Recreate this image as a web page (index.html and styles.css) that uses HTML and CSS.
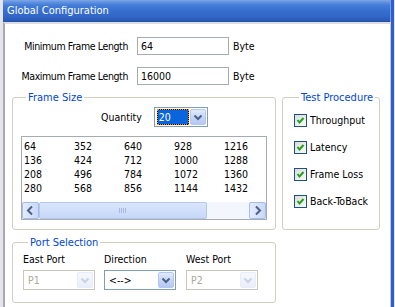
FILE: index.html
```html
<!DOCTYPE html>
<html>
<head>
<meta charset="utf-8">
<link rel="stylesheet" href="styles.css">
</head>
<body>
<div class="frame">
  <div class="window">
    <div class="titlebar">Global Configuration</div>
    <div class="client">
      <div class="field-row">
        <span class="field-label">Minimum Frame Length</span>
        <span class="text-input">64</span>
        <span class="unit">Byte</span>
      </div>
      <div class="field-row">
        <span class="field-label">Maximum Frame Length</span>
        <span class="text-input">16000</span>
        <span class="unit">Byte</span>
      </div>

      <div class="groups">
        <fieldset class="group group-frame">
          <legend>Frame Size</legend>
          <div class="qty-row">
            <span>Quantity</span>
            <div class="combo combo-qty">
              <span class="combo-value selected">20</span>
              <span class="combo-btn"><svg width="14" height="16" viewBox="0 0 14 16"><path d="M3.5 6.5 L7 10 L10.5 6.5" fill="none" stroke="#4d6185" stroke-width="2"/></svg></span>
            </div>
          </div>
          <div class="listbox">
            <div class="list-grid">
              <span>64</span><span>352</span><span>640</span><span>928</span><span>1216</span>
              <span>136</span><span>424</span><span>712</span><span>1000</span><span>1288</span>
              <span>208</span><span>496</span><span>784</span><span>1072</span><span>1360</span>
              <span>280</span><span>568</span><span>856</span><span>1144</span><span>1432</span>
            </div>
            <div class="hscroll">
              <span class="sb-btn"><svg width="15" height="15" viewBox="0 0 15 15"><path d="M9 3.5 L5 7.5 L9 11.5" fill="none" stroke="#4d6185" stroke-width="2"/></svg></span>
              <span class="sb-track">
                <span class="sb-thumb"><svg width="8" height="5" viewBox="0 0 8 5"><path d="M0.5 0 V5 M2.5 0 V5 M4.5 0 V5 M6.5 0 V5" stroke="#a9b9dd" stroke-width="1"/></svg></span>
              </span>
              <span class="sb-btn"><svg width="15" height="15" viewBox="0 0 15 15"><path d="M6 3.5 L10 7.5 L6 11.5" fill="none" stroke="#4d6185" stroke-width="2"/></svg></span>
            </div>
          </div>
        </fieldset>

        <fieldset class="group group-test">
          <legend>Test Procedure</legend>
          <ul class="checks">
            <li><span class="checkbox"><svg width="11" height="11" viewBox="0 0 11 11"><path d="M2.5 5 L4.5 7.5 L8.5 3" fill="none" stroke="#21a121" stroke-width="2"/></svg></span>Throughput</li>
            <li><span class="checkbox"><svg width="11" height="11" viewBox="0 0 11 11"><path d="M2.5 5 L4.5 7.5 L8.5 3" fill="none" stroke="#21a121" stroke-width="2"/></svg></span>Latency</li>
            <li><span class="checkbox"><svg width="11" height="11" viewBox="0 0 11 11"><path d="M2.5 5 L4.5 7.5 L8.5 3" fill="none" stroke="#21a121" stroke-width="2"/></svg></span>Frame Loss</li>
            <li><span class="checkbox"><svg width="11" height="11" viewBox="0 0 11 11"><path d="M2.5 5 L4.5 7.5 L8.5 3" fill="none" stroke="#21a121" stroke-width="2"/></svg></span>Back-ToBack</li>
          </ul>
        </fieldset>
      </div>

      <fieldset class="group group-port">
        <legend>Port Selection</legend>
        <div class="port-grid">
          <span>East Port</span>
          <span>Direction</span>
          <span>West Port</span>
          <div class="combo disabled">
            <span class="combo-value">P1</span>
            <span class="combo-btn"><svg width="14" height="16" viewBox="0 0 14 16"><path d="M3.5 6.5 L7 10 L10.5 6.5" fill="none" stroke="#c9d2e4" stroke-width="2"/></svg></span>
          </div>
          <div class="combo">
            <span class="combo-value">&lt;--&gt;</span>
            <span class="combo-btn"><svg width="14" height="16" viewBox="0 0 14 16"><path d="M3.5 6.5 L7 10 L10.5 6.5" fill="none" stroke="#4d6185" stroke-width="2"/></svg></span>
          </div>
          <div class="combo disabled">
            <span class="combo-value">P2</span>
            <span class="combo-btn"><svg width="14" height="16" viewBox="0 0 14 16"><path d="M3.5 6.5 L7 10 L10.5 6.5" fill="none" stroke="#c9d2e4" stroke-width="2"/></svg></span>
          </div>
        </div>
      </fieldset>
    </div>
  </div>
</div>
</body>
</html>
```

FILE: styles.css
```css
* { box-sizing: border-box; }

html, body {
  margin: 0;
  padding: 0;
  width: 395px;
  height: 307px;
  overflow: hidden;
}

body {
  font-family: "DejaVu Sans Condensed", "DejaVu Sans", "Liberation Sans", sans-serif;
  font-size: 10.5px;
  line-height: 13px;
  color: #000;
}

.frame {
  display: flex;
  height: 307px;
  padding-left: 3px;
  padding-right: 1px;
  background: #e4e4ea;
}

.window {
  flex: 1;
  display: flex;
  flex-direction: column;
  border-right: 3px solid #2d5fd2;
}

.titlebar {
  height: 22px;
  padding-left: 4px;
  line-height: 22px;
  font-size: 11px;
  color: #fff;
  white-space: nowrap;
  background: linear-gradient(#7ea8e6 0, #6393e0 2px, #447ed8 5px, #3870d0 10px, #3268c8 16px, #2b5cb8 20px, #234ea4 22px);
  border-right: 1px solid #7a9ede;
}

.client {
  flex: 1;
  background: #fff;
  border-top: 2px solid #dcdce2;
  border-left: 2px solid #a9a9b2;
  border-right: 1px solid #c8c8cc;
  padding: 13px 0 0 7px;
}

.field-row {
  display: flex;
  align-items: center;
  height: 18px;
  white-space: nowrap;
}

.field-row + .field-row {
  margin-top: 12px;
}

.field-label {
  width: 116px;
  margin-right: 9px;
  text-align: right;
  display: flex;
  justify-content: flex-end;
  letter-spacing: -0.4px;
}

.text-input {
  width: 92px;
  height: 18px;
  border: 1px solid #a5acb2;
  padding-left: 3px;
  line-height: 16px;
  flex: none;
}

.unit {
  margin-left: 4px;
}

.groups {
  display: flex;
  gap: 6px;
  margin-top: 6px;
}

.group {
  margin: 0;
  min-width: 0;
  border: 1px solid #d0d0bf;
  border-radius: 3px;
}

.group legend {
  padding: 0 2px;
  margin-left: 5px;
  color: #0046d5;
  line-height: 13px;
  font-size: 11px;
  white-space: nowrap;
}

.group-frame {
  width: 264px;
  padding: 3px 8px 9px 8px;
}

.qty-row {
  display: flex;
  align-items: center;
  gap: 12px;
  padding-left: 80px;
}

.combo {
  display: flex;
  height: 20px;
  border: 1px solid #7f9db9;
  background: #fff;
}

.combo-qty {
  width: 54px;
}

.combo-value {
  flex: 1;
  padding-left: 4px;
  line-height: 18px;
}

.combo-value.selected {
  margin: 1px 0 1px 2px;
  padding-left: 1px;
  line-height: 14px;
  color: #fff;
  border: 1px dotted #ff9c00;
  background: linear-gradient(#0a64dc, #0a64dc) padding-box, linear-gradient(#000, #000) border-box;
}

.combo-btn {
  width: 16px;
  margin: 1px;
  display: flex;
  align-items: center;
  justify-content: center;
  border: 1px solid #b6c7ef;
  border-radius: 2px;
  background: linear-gradient(#e2ebfd, #c6d6f8 50%, #b4c8f4);
}

.combo.disabled {
  border-color: #c9c7ba;
  color: #aca899;
}

.combo.disabled .combo-btn {
  border-color: #e6ecf8;
  background: linear-gradient(#f6f8fd, #e9eef9);
}

.listbox {
  margin-top: 9px;
  height: 84px;
  border: 1px solid #a5acb2;
  display: flex;
  flex-direction: column;
}

.list-grid {
  display: grid;
  grid-template-columns: repeat(5, 50px);
  grid-auto-rows: 14px;
  padding: 2px 0 0 2px;
  line-height: 14px;
}

.hscroll {
  margin-top: auto;
  height: 17px;
  display: flex;
  background: #f3f6fd;
}

.sb-btn {
  width: 17px;
  display: flex;
  align-items: center;
  justify-content: center;
  border: 1px solid #a6bce8;
  border-radius: 2px;
  background: linear-gradient(90deg, #e4ecfd, #c8d8fa);
}

.sb-track {
  flex: 1;
  display: flex;
  padding: 0 42px 0 0;
}

.sb-thumb {
  flex: 1;
  display: flex;
  align-items: center;
  justify-content: center;
  border: 1px solid #b4c8ef;
  border-radius: 2px;
  background: linear-gradient(#dbe6fd, #c6d7f8);
}

.group-test {
  width: 98px;
  padding: 4px 0 0 11px;
}

.checks {
  list-style: none;
  margin: 0;
  padding: 0;
  display: flex;
  flex-direction: column;
  gap: 14px;
  margin-top: 6px;
}

.checks li {
  display: flex;
  align-items: center;
  gap: 3px;
  height: 13px;
  white-space: nowrap;
}

.checkbox {
  width: 13px;
  height: 13px;
  border: 1px solid #1c5180;
  display: flex;
  align-items: center;
  justify-content: center;
  background: linear-gradient(135deg, #dcdcd7, #fbfbf9);
}

.group-port {
  width: 264px;
  margin-top: 6px;
  padding: 4px 10px 12px 10px;
}

.port-grid {
  display: grid;
  grid-template-columns: 81px 82px 72px;
  row-gap: 4px;
}

.port-grid .combo {
  width: 72px;
}
```
